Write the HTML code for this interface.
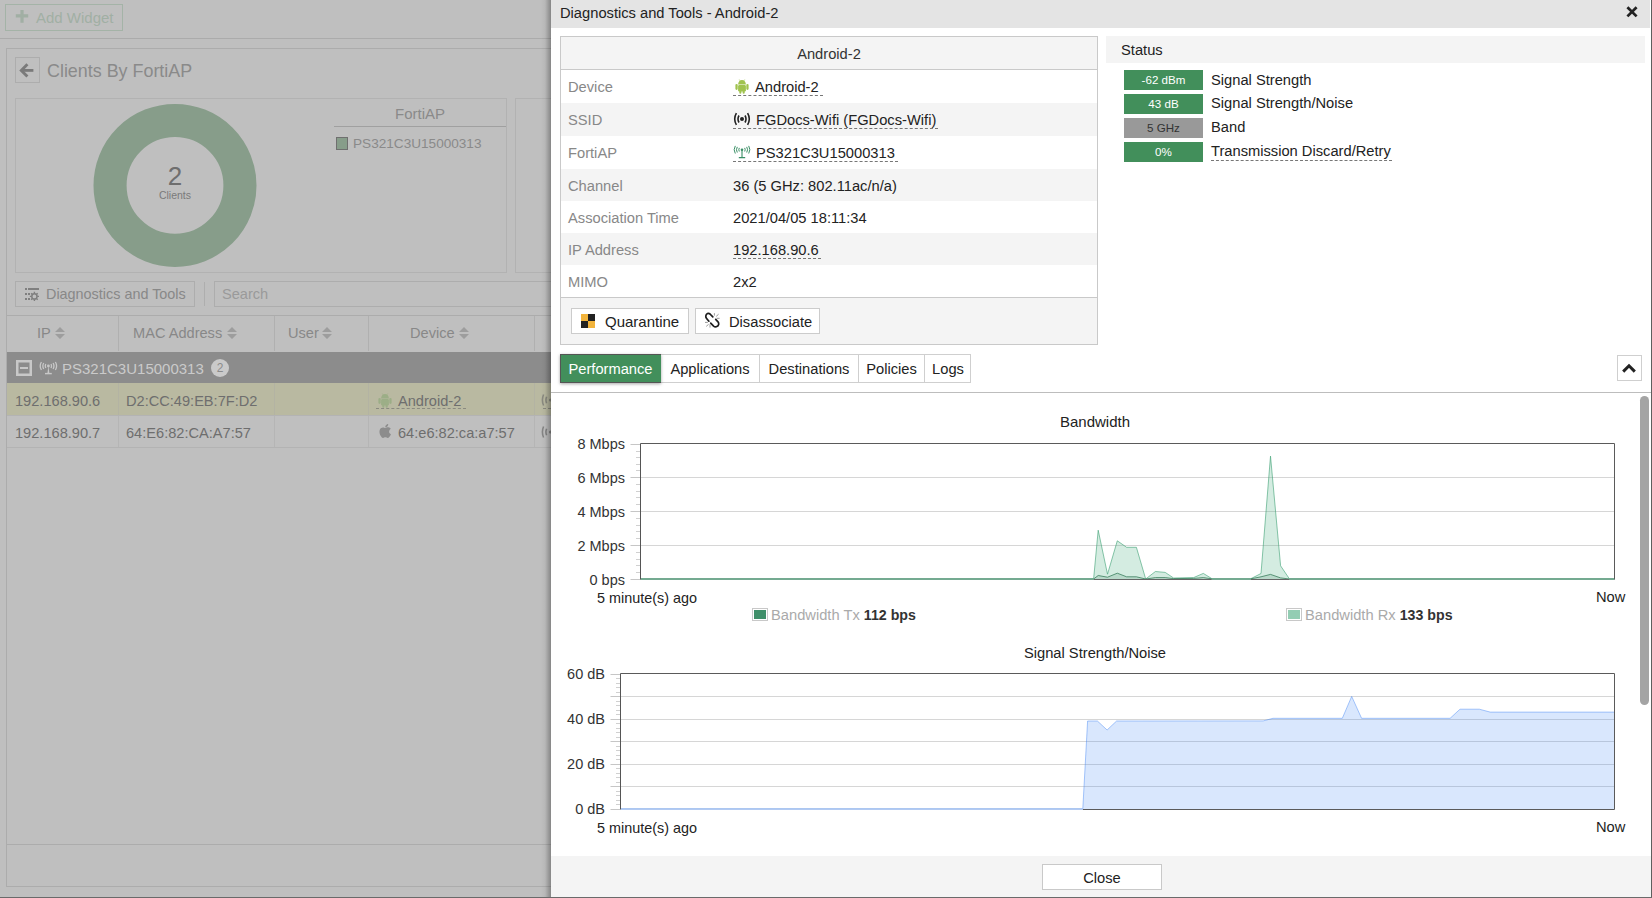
<!DOCTYPE html>
<html><head><meta charset="utf-8">
<style>
*{margin:0;padding:0;box-sizing:border-box}
html,body{width:1652px;height:898px;overflow:hidden;background:#bfbfbf;font-family:"Liberation Sans",sans-serif;position:relative}
.a{position:absolute;white-space:nowrap}
.t{position:absolute;white-space:nowrap;font-size:14.7px;line-height:15px}
.bx{position:absolute}
</style></head><body>
<!-- ===== background page ===== -->
<div id="bg">
<div class="bx" style="left:5px;top:4px;width:118px;height:27px;border:1px solid #a4b3a7"></div>
<svg class="a" style="left:15px;top:9px" width="15" height="15" viewBox="0 0 15 15"><path d="M7 1V13.7M0.8 6.9H13.2" stroke="#a1afa4" stroke-width="3.2"/></svg>
<div class="t" style="left:36px;top:10px;color:#a1afa4;font-size:15px">Add Widget</div>
<div class="bx" style="left:0;top:38px;width:551px;height:1px;background:#ababab"></div>
<!-- widget panel -->
<div class="bx" style="left:6px;top:48px;width:560px;height:839px;border:1px solid #acacac"></div>
<div class="bx" style="left:7px;top:844px;width:550px;height:1px;background:#acacac"></div>
<div class="bx" style="left:15px;top:57px;width:25px;height:26px;border:1px solid #adadad"></div>
<svg class="a" style="left:15px;top:56px" width="25" height="28" viewBox="0 0 25 28"><path d="M12.4 8.2L6.3 14.4L12.4 20.6" stroke="#7a7a7a" stroke-width="2.9" fill="none" stroke-linejoin="miter"/><path d="M7 14.4H18.4" stroke="#7a7a7a" stroke-width="2.8"/></svg>
<div class="t" style="left:47px;top:62px;color:#8a8a8a;font-size:17.9px;line-height:18px">Clients By FortiAP</div>
<div class="bx" style="left:15px;top:98px;width:492px;height:175px;border:1px solid #b2b2b2"></div>
<div class="bx" style="left:515px;top:98px;width:60px;height:175px;border:1px solid #b2b2b2"></div>
<svg class="a" style="left:0;top:0" width="551" height="300">
<circle cx="175" cy="185.4" r="64.95" fill="none" stroke="#879d8a" stroke-width="33.1"/>
</svg>
<div class="t" style="left:145px;top:163px;width:60px;text-align:center;color:#6e6e6e;font-size:26px;line-height:26px">2</div>
<div class="t" style="left:145px;top:190px;width:60px;text-align:center;color:#7a7a7a;font-size:10.5px;line-height:11px">Clients</div>
<div class="t" style="left:334px;top:106px;width:172px;text-align:center;color:#8a8a8a;font-size:15px">FortiAP</div>
<div class="bx" style="left:334px;top:126px;width:172px;height:1px;background:#a0a0a0"></div>
<div class="bx" style="left:336px;top:137px;width:12px;height:13px;background:#879d8a;border:1px solid #6f6f6f"></div>
<div class="t" style="left:353px;top:136px;color:#8a8a8a;font-size:13.6px">PS321C3U15000313</div>
<!-- toolbar -->
<div class="bx" style="left:15px;top:281px;width:180px;height:26px;border:1px solid #adadad"></div>
<div class="t" style="left:46px;top:287px;color:#888;font-size:14.4px">Diagnostics and Tools</div>
<div class="bx" style="left:204px;top:282px;width:1px;height:24px;background:#aeaeae"></div>
<div class="bx" style="left:214px;top:281px;width:400px;height:26px;border:1px solid #adadad"></div>
<div class="t" style="left:222px;top:287px;color:#9a9a9a;font-size:14.6px">Search</div>
<!-- table -->
<div class="bx" style="left:7px;top:315px;width:544px;height:1px;background:#acacac"></div>
<div class="bx" style="left:7px;top:352px;width:544px;height:31px;background:#8c8c8c"></div>
<div class="bx" style="left:7px;top:383px;width:544px;height:32px;background:#b9b9a1"></div>
<div class="bx" style="left:7px;top:415px;width:544px;height:1px;background:#b3b3b3"></div>
<div class="bx" style="left:7px;top:447px;width:544px;height:1px;background:#b3b3b3"></div>
<div class="bx" style="left:118px;top:316px;width:1px;height:35px;background:#b0b0b0"></div>
<div class="bx" style="left:274px;top:316px;width:1px;height:35px;background:#b0b0b0"></div>
<div class="bx" style="left:368px;top:316px;width:1px;height:35px;background:#b0b0b0"></div>
<div class="bx" style="left:534px;top:316px;width:1px;height:35px;background:#b0b0b0"></div>
<div class="bx" style="left:118px;top:383px;width:1px;height:32px;background:#b3b3a3"></div>
<div class="bx" style="left:274px;top:383px;width:1px;height:32px;background:#b3b3a3"></div>
<div class="bx" style="left:368px;top:383px;width:1px;height:32px;background:#b3b3a3"></div>
<div class="bx" style="left:534px;top:383px;width:1px;height:32px;background:#b3b3a3"></div>
<div class="bx" style="left:118px;top:416px;width:1px;height:31px;background:#b5b5b5"></div>
<div class="bx" style="left:274px;top:416px;width:1px;height:31px;background:#b5b5b5"></div>
<div class="bx" style="left:368px;top:416px;width:1px;height:31px;background:#b5b5b5"></div>
<div class="bx" style="left:534px;top:416px;width:1px;height:31px;background:#b5b5b5"></div>
<!-- header texts -->
<div class="t" style="left:37px;top:326px;color:#888;font-size:14.6px">IP</div>
<div class="t" style="left:133px;top:326px;color:#888;font-size:14.6px">MAC Address</div>
<div class="t" style="left:288px;top:326px;color:#888;font-size:14.6px">User</div>
<div class="t" style="left:410px;top:326px;color:#888;font-size:14.6px">Device</div>
<svg class="a" style="left:0;top:320px" width="551" height="30">
<g fill="#9d9d9d">
<path d="M55 12L60 7L65 12ZM55 14L65 14L60 19Z"/>
<path d="M227 12L232 7L237 12ZM227 14L237 14L232 19Z"/>
<path d="M322 12L327 7L332 12ZM322 14L332 14L327 19Z"/>
<path d="M459 12L464 7L469 12ZM459 14L469 14L464 19Z"/>
</g></svg>
<!-- group row -->
<div class="bx" style="left:16px;top:360px;width:16px;height:16px;border:2px solid #c8c8c8;box-shadow:inset 0 0 0 0.5px #c8c8c8"></div>
<div class="bx" style="left:20px;top:367px;width:8px;height:2px;background:#c8c8c8"></div>
<svg class="a" style="left:39px;top:361px" width="19" height="14" viewBox="0 0 19 14"><g fill="none" stroke="#c8c8c8" stroke-width="1.3"><path d="M2.4 1Q0 5 2.4 9M16.4 1Q18.8 5 16.4 9M4.7 2Q3 5 4.7 8M14.1 2Q15.8 5 14.1 8M6.8 3Q5.8 5 6.8 7M12 3Q13 5 12 7"/></g><circle cx="9.4" cy="5" r="1.4" fill="#c8c8c8"/><path d="M9.4 5L8.4 12.4H10.4Z" fill="#c8c8c8"/><path d="M6 12.6H12.8" stroke="#c8c8c8" stroke-width="1.4"/></svg>
<div class="t" style="left:62px;top:361px;color:#cacaca;font-size:15px">PS321C3U15000313</div>
<div class="bx" style="left:211px;top:359px;width:18px;height:18px;border-radius:9px;background:#cacaca"></div>
<div class="t" style="left:211px;top:362px;width:18px;text-align:center;color:#8c8c8c;font-size:12px;line-height:12px">2</div>
<!-- rows -->
<div class="t" style="left:15px;top:394px;color:#6e6e6e;font-size:14.6px">192.168.90.6</div>
<div class="t" style="left:126px;top:394px;color:#6e6e6e;font-size:14.6px">D2:CC:49:EB:7F:D2</div>
<svg class="a" style="left:378px;top:393px" width="14" height="15" viewBox="0 0 14 15"><g fill="#9cae87"><path d="M3.1 5.5A3.9 4.5 0 0 1 10.9 5.5Z"/><rect x="3.1" y="5.9" width="7.8" height="6.6" rx="1.3"/><rect x="0.4" y="4.9" width="2.3" height="6.1" rx="1.15"/><rect x="11.3" y="4.9" width="2.3" height="6.1" rx="1.15"/><rect x="4.3" y="11" width="2.1" height="3.8" rx="1"/><rect x="7.6" y="11" width="2.1" height="3.8" rx="1"/></g><path d="M4.2 0.4L5.2 2.2M9.8 0.4L8.8 2.2" stroke="#9cae87" stroke-width="0.5"/></svg>
<div class="t" style="left:398px;top:394px;color:#6e6e6e;font-size:14.6px">Android-2</div>
<div class="bx" style="left:376px;top:408px;width:90px;height:0;border-top:1px dashed #8a8a80"></div>
<div class="t" style="left:15px;top:426px;color:#6e6e6e;font-size:14.6px">192.168.90.7</div>
<div class="t" style="left:126px;top:426px;color:#6e6e6e;font-size:14.6px">64:E6:82:CA:A7:57</div>
<svg class="a" style="left:378px;top:423px" width="14" height="16" viewBox="0 0 14 16"><path d="M11.2 8.6c0-1.8 1.5-2.7 1.6-2.8-.9-1.3-2.2-1.4-2.7-1.5-1.2-.1-2.2.7-2.8.7-.6 0-1.5-.7-2.4-.6C3.7 4.4 2.6 5.100 2 6.200.8 8.300 1.700 11.500 2.900 13.200c.6.800 1.300 1.800 2.200 1.700.9 0 1.200-.6 2.300-.6s1.400.6 2.300.6c1 0 1.600-.9 2.200-1.700.7-1 1-1.900 1-2-.1 0-1.900-.7-1.900-2.700zM9.500 3.300c.5-.6.800-1.400.7-2.300-.7 0-1.600.5-2.100 1.100-.5.500-.9 1.400-.8 2.200.8.1 1.600-.4 2.200-1z" fill="#8c8c8c"/></svg>
<div class="t" style="left:398px;top:426px;color:#6e6e6e;font-size:14.6px">64:e6:82:ca:a7:57</div>
<svg class="a" style="left:541px;top:393px" width="12" height="14" viewBox="0 0 12 14"><g fill="none" stroke="#8a8a80" stroke-width="1.6"><path d="M2.6 1.5Q0.2 7 2.6 12.5M5.6 3.8Q4.2 7 5.6 10.2"/></g><circle cx="9.5" cy="7" r="1.6" fill="#8a8a80"/></svg>
<svg class="a" style="left:541px;top:425px" width="12" height="14" viewBox="0 0 12 14"><g fill="none" stroke="#858585" stroke-width="1.6"><path d="M2.6 1.5Q0.2 7 2.6 12.5M5.6 3.8Q4.2 7 5.6 10.2"/></g><circle cx="9.5" cy="7" r="1.6" fill="#858585"/></svg>
<div class="bx" style="left:543px;top:408px;width:8px;height:0;border-top:1px dashed #8a8a80"></div>
<!-- diag button icon -->
<svg class="a" style="left:18px;top:282px" width="30" height="24" viewBox="0 0 30 24"><g fill="#7f7f7f"><rect x="7" y="6" width="2" height="2"/><rect x="10" y="6" width="11" height="2"/><rect x="7" y="11" width="2" height="2"/><rect x="10" y="11" width="2" height="2"/><rect x="7" y="16" width="2" height="2"/><rect x="10" y="16" width="2" height="2"/></g><circle cx="16.4" cy="14.4" r="2.6" fill="none" stroke="#7f7f7f" stroke-width="1.5"/><path d="M19.20 14.40L21.00 14.40M18.38 16.38L19.65 17.65M16.40 17.20L16.40 19.00M14.42 16.38L13.15 17.65M13.60 14.40L11.80 14.40M14.42 12.42L13.15 11.15M16.40 11.60L16.40 9.80M18.38 12.42L19.65 11.15" stroke="#7f7f7f" stroke-width="1.4"/></svg>
</div>

<!-- ===== dialog ===== -->
<div class="bx" style="left:541px;top:0;width:10px;height:897px;background:linear-gradient(to right,rgba(0,0,0,0),rgba(0,0,0,0.04) 40%,rgba(0,0,0,0.3))"></div>
<div id="dlg" class="bx" style="left:551px;top:0;width:1101px;height:897px;background:#fff"></div>
<div class="bx" style="left:551px;top:0;width:1099px;height:28px;background:#e4e4e4"></div>
<div class="bx" style="left:1651px;top:0;width:1px;height:897px;background:#5f5f5f"></div>
<div class="t" style="left:560px;top:6px;color:#222">Diagnostics and Tools - Android-2</div>
<svg class="a" style="left:1625px;top:5px" width="14" height="14" viewBox="0 0 14 14"><path d="M2.4 2.2L11.6 11.4M11.6 2.2L2.4 11.4" stroke="#222" stroke-width="2.7"/></svg>
<!-- info box -->
<div class="bx" style="left:560px;top:36px;width:538px;height:309px;border:1px solid #c9c9c9;background:#fff"></div>
<div class="bx" style="left:561px;top:37px;width:536px;height:32px;background:#f4f4f4"></div>
<div class="bx" style="left:561px;top:69px;width:536px;height:1px;background:#c9c9c9"></div>
<div class="bx" style="left:561px;top:103px;width:536px;height:33px;background:#f4f4f4"></div>
<div class="bx" style="left:561px;top:169px;width:536px;height:32px;background:#f4f4f4"></div>
<div class="bx" style="left:561px;top:233px;width:536px;height:32px;background:#f4f4f4"></div>
<div class="bx" style="left:561px;top:297px;width:536px;height:1px;background:#c9c9c9"></div>
<div class="bx" style="left:561px;top:298px;width:536px;height:46px;background:#f4f4f4"></div>
<div class="t" style="left:561px;top:47px;width:536px;text-align:center;color:#333">Android-2</div>
<div class="t" style="left:568px;top:80px;color:#888">Device</div>
<div class="t" style="left:568px;top:113px;color:#888">SSID</div>
<div class="t" style="left:568px;top:146px;color:#888">FortiAP</div>
<div class="t" style="left:568px;top:179px;color:#888">Channel</div>
<div class="t" style="left:568px;top:211px;color:#888">Association Time</div>
<div class="t" style="left:568px;top:243px;color:#888">IP Address</div>
<div class="t" style="left:568px;top:275px;color:#888">MIMO</div>
<svg class="a" style="left:735px;top:79px" width="14" height="15" viewBox="0 0 14 15"><g fill="#a0c34f"><path d="M3.1 5.5A3.9 4.5 0 0 1 10.9 5.5Z"/><rect x="3.1" y="5.9" width="7.8" height="6.6" rx="1.3"/><rect x="0.4" y="4.9" width="2.3" height="6.1" rx="1.15"/><rect x="11.3" y="4.9" width="2.3" height="6.1" rx="1.15"/><rect x="4.3" y="11" width="2.1" height="3.8" rx="1"/><rect x="7.6" y="11" width="2.1" height="3.8" rx="1"/></g><path d="M4.2 0.4L5.2 2.2M9.8 0.4L8.8 2.2" stroke="#a0c34f" stroke-width="0.5"/></svg>
<div class="t" style="left:755px;top:80px;color:#222">Android-2</div>
<div class="bx" style="left:733px;top:95px;width:90px;height:0;border-top:1px dashed #777"></div>
<svg class="a" style="left:733px;top:112px" width="18" height="14" viewBox="0 0 18 14"><g fill="none" stroke="#222" stroke-width="1.6"><path d="M3.4 1.2Q0 7 3.4 12.8M14.6 1.2Q18 7 14.6 12.8M6 3.5Q4 7 6 10.5M12 3.5Q14 7 12 10.5"/></g><circle cx="9" cy="7" r="2" fill="#222"/></svg>
<div class="t" style="left:756px;top:113px;color:#222">FGDocs-Wifi (FGDocs-Wifi)</div>
<div class="bx" style="left:733px;top:128px;width:205px;height:0;border-top:1px dashed #777"></div>
<svg class="a" style="left:733px;top:145px" width="18" height="14" viewBox="0 0 18 14"><g fill="none" stroke="#3a8f66" stroke-width="1"><path d="M2.3 0.9Q0 4.7 2.3 8.5M15.7 0.9Q18 4.7 15.7 8.5M4.3 1.9Q2.6 4.7 4.3 7.5M13.7 1.9Q15.4 4.7 13.7 7.5M6.3 2.9Q5.3 4.7 6.3 6.5M11.7 2.9Q12.7 4.7 11.7 6.5"/><path d="M9 5V12.4M5.8 12.6H12.2" stroke-width="1.1"/></g><circle cx="9" cy="4.7" r="1.3" fill="#3a8f66"/></svg>
<div class="t" style="left:756px;top:146px;color:#222">PS321C3U15000313</div>
<div class="bx" style="left:733px;top:161px;width:165px;height:0;border-top:1px dashed #777"></div>
<div class="t" style="left:733px;top:179px;color:#222">36 (5 GHz: 802.11ac/n/a)</div>
<div class="t" style="left:733px;top:211px;color:#222">2021/04/05 18:11:34</div>
<div class="t" style="left:733px;top:243px;color:#222">192.168.90.6</div>
<div class="bx" style="left:733px;top:258px;width:88px;height:0;border-top:1px dashed #777"></div>
<div class="t" style="left:733px;top:275px;color:#222">2x2</div>
<!-- buttons -->
<div class="bx" style="left:571px;top:308px;width:118px;height:26px;border:1px solid #ccc;background:#fff"></div>
<svg class="a" style="left:581px;top:314px" width="14" height="14" viewBox="0 0 14 14"><rect x="0" y="0" width="7" height="7" fill="#f2b43c"/><rect x="7" y="0" width="7" height="7" fill="#222"/><rect x="0" y="7" width="7" height="7" fill="#222"/><rect x="7" y="7" width="7" height="7" fill="#f2b43c"/></svg>
<div class="t" style="left:605px;top:314px;color:#222;font-size:15px">Quarantine</div>
<div class="bx" style="left:695px;top:308px;width:125px;height:26px;border:1px solid #ccc;background:#fff"></div>
<svg class="a" style="left:698px;top:308px" width="30" height="26" viewBox="0 0 30 26"><g fill="none" stroke="#1e1e1e" stroke-width="1.7" stroke-linecap="round" stroke-linejoin="round"><path d="M14.8 8.8L12 6Q10.8 4.9 9.5 5.5Q8 6.3 7.8 8Q7.7 9.4 8.6 10.5L10.9 13.2"/><path d="M12.7 15.2L15.6 18.2Q16.8 19.2 18.3 18.8Q20.4 18 20.7 16.3Q20.9 15 20 13.8L17.7 11.3"/></g><g stroke="#9a9a9a" stroke-width="1"><path d="M16.4 5.2V7.6M18.2 8.4L20.6 6.2M18.6 10.3H21.6M7 14.4H9.8M8.2 18.4L10.6 16.3M12 16.3V19.6"/></g></svg>
<div class="t" style="left:729px;top:315px;color:#222">Disassociate</div>
<!-- status -->
<div class="bx" style="left:1106px;top:36px;width:539px;height:27px;background:#f4f4f4"></div>
<div class="t" style="left:1121px;top:43px;color:#222">Status</div>
<div class="bx" style="left:1124px;top:70px;width:79px;height:20px;background:#428f5b"></div>
<div class="bx" style="left:1124px;top:94px;width:79px;height:20px;background:#428f5b"></div>
<div class="bx" style="left:1124px;top:118px;width:79px;height:20px;background:#999"></div>
<div class="bx" style="left:1124px;top:142px;width:79px;height:20px;background:#428f5b"></div>
<div class="t" style="left:1124px;top:74px;width:79px;text-align:center;color:#fff;font-size:11.6px;line-height:12px">-62 dBm</div>
<div class="t" style="left:1124px;top:98px;width:79px;text-align:center;color:#fff;font-size:11.6px;line-height:12px">43 dB</div>
<div class="t" style="left:1124px;top:122px;width:79px;text-align:center;color:#333;font-size:11.6px;line-height:12px">5 GHz</div>
<div class="t" style="left:1124px;top:146px;width:79px;text-align:center;color:#fff;font-size:11.6px;line-height:12px">0%</div>
<div class="t" style="left:1211px;top:73px;color:#222">Signal Strength</div>
<div class="t" style="left:1211px;top:96px;color:#222">Signal Strength/Noise</div>
<div class="t" style="left:1211px;top:120px;color:#222">Band</div>
<div class="t" style="left:1211px;top:144px;color:#222">Transmission Discard/Retry</div>
<div class="bx" style="left:1211px;top:160px;width:181px;height:0;border-top:1px dashed #777"></div>
<!-- tabs -->
<div class="bx" style="left:560px;top:354px;width:411px;height:29px;border:1px solid #cfcfcf;background:#fff"></div>
<div class="bx" style="left:759px;top:354px;width:1px;height:29px;background:#cfcfcf"></div>
<div class="bx" style="left:858px;top:354px;width:1px;height:29px;background:#cfcfcf"></div>
<div class="bx" style="left:924px;top:354px;width:1px;height:29px;background:#cfcfcf"></div>
<div class="bx" style="left:560px;top:354px;width:101px;height:29px;background:#428f5b;border:1px solid #555;border-right:0;box-shadow:0 1px 3px rgba(0,0,0,0.35)"></div>
<div class="t" style="left:560px;top:362px;width:101px;text-align:center;color:#fff">Performance</div>
<div class="t" style="left:661px;top:362px;width:98px;text-align:center;color:#222">Applications</div>
<div class="t" style="left:760px;top:362px;width:98px;text-align:center;color:#222">Destinations</div>
<div class="t" style="left:859px;top:362px;width:65px;text-align:center;color:#222">Policies</div>
<div class="t" style="left:925px;top:362px;width:46px;text-align:center;color:#222">Logs</div>
<div class="bx" style="left:1617px;top:355px;width:25px;height:26px;border:1px solid #cfcfcf"></div>
<svg class="a" style="left:1620px;top:362px" width="18" height="13" viewBox="0 0 18 13"><path d="M3.2 9.6L9 3.8L14.8 9.6" fill="none" stroke="#222" stroke-width="3"/></svg>
<div class="bx" style="left:551px;top:392px;width:1100px;height:1px;background:#bdbdbd"></div>
<div class="bx" style="left:1640px;top:396px;width:9px;height:309px;border-radius:4.5px;background:#a4a4a4"></div>
<!-- footer -->
<div class="bx" style="left:551px;top:856px;width:1100px;height:41px;background:#f4f4f4"></div>
<div class="bx" style="left:1042px;top:864px;width:120px;height:26px;border:1px solid #c9c9c9;background:#fff"></div>
<div class="t" style="left:1042px;top:871px;width:120px;text-align:center;color:#222">Close</div>
<!--CHARTS-->
<svg class="a" style="left:0;top:0" width="1652" height="898" shape-rendering="auto">
<path d="M640.5 477.5H1614.5" stroke="#d6d6d6"/>
<path d="M640.5 511.5H1614.5" stroke="#d6d6d6"/>
<path d="M640.5 545.5H1614.5" stroke="#d6d6d6"/>
<path d="M630.5 444.5H640" stroke="#c6c6c6"/>
<path d="M636 451.5H640" stroke="#d0d0d0"/>
<path d="M636 457.5H640" stroke="#d0d0d0"/>
<path d="M636 464.5H640" stroke="#d0d0d0"/>
<path d="M636 470.5H640" stroke="#d0d0d0"/>
<path d="M630.5 477.5H640" stroke="#c6c6c6"/>
<path d="M636 484.5H640" stroke="#d0d0d0"/>
<path d="M636 491.5H640" stroke="#d0d0d0"/>
<path d="M636 497.5H640" stroke="#d0d0d0"/>
<path d="M636 504.5H640" stroke="#d0d0d0"/>
<path d="M630.5 511.5H640" stroke="#c6c6c6"/>
<path d="M636 518.5H640" stroke="#d0d0d0"/>
<path d="M636 525.5H640" stroke="#d0d0d0"/>
<path d="M636 531.5H640" stroke="#d0d0d0"/>
<path d="M636 538.5H640" stroke="#d0d0d0"/>
<path d="M630.5 545.5H640" stroke="#c6c6c6"/>
<path d="M636 552.5H640" stroke="#d0d0d0"/>
<path d="M636 559.5H640" stroke="#d0d0d0"/>
<path d="M636 565.5H640" stroke="#d0d0d0"/>
<path d="M636 572.5H640" stroke="#d0d0d0"/>
<path d="M630.5 579.5H640" stroke="#c6c6c6"/>
<polygon points="640.5,579.0 1093.6,579.0 1098.2,530.2 1107.5,574.2 1117.3,540.8 1126.6,547.3 1136.4,547.3 1145.7,579.0 1155.4,571.5 1165.2,572.4 1173.6,578.0 1193.6,577.6 1203.3,573.4 1211.8,578.6 1251.0,578.6 1261.0,573.5 1270.5,456.1 1280.6,565.8 1289.5,579.0 1614.5,579.0 1614.5,579.5 640.5,579.5" fill="rgba(90,180,140,0.26)"/>
<polyline points="640.5,579.0 1093.6,579.0 1098.2,530.2 1107.5,574.2 1117.3,540.8 1126.6,547.3 1136.4,547.3 1145.7,579.0 1155.4,571.5 1165.2,572.4 1173.6,578.0 1193.6,577.6 1203.3,573.4 1211.8,578.6 1251.0,578.6 1261.0,573.5 1270.5,456.1 1280.6,565.8 1289.5,579.0 1614.5,579.0" fill="none" stroke="rgba(60,160,115,0.6)" stroke-width="1"/>
<polygon points="640.5,579.0 1093.6,579.0 1098.2,575.5 1107.5,577.2 1117.3,573.2 1126.6,576.8 1136.4,576.8 1145.7,579.0 1155.4,577.6 1165.2,577.6 1173.6,578.6 1193.6,578.4 1203.3,577.6 1211.8,578.8 1251.0,578.8 1261.0,576.8 1270.5,574.4 1280.6,577.9 1289.5,579.0 1614.5,579.0 1614.5,579.5 640.5,579.5" fill="rgba(60,130,95,0.18)"/>
<polyline points="640.5,579.0 1093.6,579.0 1098.2,575.5 1107.5,577.2 1117.3,573.2 1126.6,576.8 1136.4,576.8 1145.7,579.0 1155.4,577.6 1165.2,577.6 1173.6,578.6 1193.6,578.4 1203.3,577.6 1211.8,578.8 1251.0,578.8 1261.0,576.8 1270.5,574.4 1280.6,577.9 1289.5,579.0 1614.5,579.0" fill="none" stroke="rgba(50,120,85,0.75)" stroke-width="1"/>
<path d="M640.5 443.5H1614.5V579.5" fill="none" stroke="#5a5a5a"/>
<path d="M640.5 443.5V579.5" fill="none" stroke="#555"/>
<path d="M1093.6 579.5H1211.8M1251 579.5H1289.5" fill="none" stroke="#666"/>
<path d="M641.0 579H1093.6M1211.8 579H1251M1289.5 579H1614.0" fill="none" stroke="#74aa91" stroke-width="2"/>
<path d="M620.5 696.5H1614.5" stroke="#d6d6d6"/>
<path d="M620.5 719.5H1614.5" stroke="#d6d6d6"/>
<path d="M620.5 741.5H1614.5" stroke="#d6d6d6"/>
<path d="M620.5 764.5H1614.5" stroke="#d6d6d6"/>
<path d="M620.5 786.5H1614.5" stroke="#d6d6d6"/>
<path d="M610.5 674.5H620" stroke="#c6c6c6"/>
<path d="M616 678.5H620" stroke="#d0d0d0"/>
<path d="M616 683.5H620" stroke="#d0d0d0"/>
<path d="M616 687.5H620" stroke="#d0d0d0"/>
<path d="M616 692.5H620" stroke="#d0d0d0"/>
<path d="M610.5 696.5H620" stroke="#c6c6c6"/>
<path d="M616 701.5H620" stroke="#d0d0d0"/>
<path d="M616 705.5H620" stroke="#d0d0d0"/>
<path d="M616 710.5H620" stroke="#d0d0d0"/>
<path d="M616 714.5H620" stroke="#d0d0d0"/>
<path d="M610.5 719.5H620" stroke="#c6c6c6"/>
<path d="M616 723.5H620" stroke="#d0d0d0"/>
<path d="M616 728.5H620" stroke="#d0d0d0"/>
<path d="M616 732.5H620" stroke="#d0d0d0"/>
<path d="M616 737.5H620" stroke="#d0d0d0"/>
<path d="M610.5 741.5H620" stroke="#c6c6c6"/>
<path d="M616 746.5H620" stroke="#d0d0d0"/>
<path d="M616 750.5H620" stroke="#d0d0d0"/>
<path d="M616 755.5H620" stroke="#d0d0d0"/>
<path d="M616 759.5H620" stroke="#d0d0d0"/>
<path d="M610.5 764.5H620" stroke="#c6c6c6"/>
<path d="M616 768.5H620" stroke="#d0d0d0"/>
<path d="M616 773.5H620" stroke="#d0d0d0"/>
<path d="M616 777.5H620" stroke="#d0d0d0"/>
<path d="M616 782.5H620" stroke="#d0d0d0"/>
<path d="M610.5 786.5H620" stroke="#c6c6c6"/>
<path d="M616 791.5H620" stroke="#d0d0d0"/>
<path d="M616 795.5H620" stroke="#d0d0d0"/>
<path d="M616 800.5H620" stroke="#d0d0d0"/>
<path d="M616 804.5H620" stroke="#d0d0d0"/>
<path d="M610.5 809.5H620" stroke="#c6c6c6"/>
<polygon points="620.5,808.8 1082.8,808.8 1087.6,721.0 1097.4,721.0 1107.1,730.0 1116.6,721.0 1263.2,720.9 1273.0,718.3 1342.3,718.3 1351.7,696.4 1361.6,718.3 1450.1,718.3 1460.0,709.2 1479.3,709.2 1490.2,712.1 1614.5,712.1 1614.5,809.5 620.5,809.5" fill="rgba(66,133,244,0.2)"/>
<polyline points="620.5,808.8 1082.8,808.8 1087.6,721.0 1097.4,721.0 1107.1,730.0 1116.6,721.0 1263.2,720.9 1273.0,718.3 1342.3,718.3 1351.7,696.4 1361.6,718.3 1450.1,718.3 1460.0,709.2 1479.3,709.2 1490.2,712.1 1614.5,712.1" fill="none" stroke="rgba(66,133,244,0.45)" stroke-width="1"/>
<path d="M620.5 673.5H1614.5V809.5H1082.8" fill="none" stroke="#5a5a5a"/>
<path d="M621.0 809H1082.8" fill="none" stroke="#a6c2ee" stroke-width="1.6"/>
<path d="M620.5 673.5V809.5" fill="none" stroke="#555"/>
</svg>
<div class="bx" style="left:752px;top:608px;width:16px;height:13px;background:#3f8f6a;border:1px solid #c8c8c8;box-shadow:inset 0 0 0 1px #fff"></div>
<div class="bx" style="left:1286px;top:608px;width:16px;height:13px;background:#93cdb3;border:1px solid #c8c8c8;box-shadow:inset 0 0 0 1px #fff"></div>
<div class="t" style="left:995px;top:414px;width:200px;text-align:center;color:#222;font-size:15px">Bandwidth</div>
<div class="t" style="left:560px;top:437px;width:65px;text-align:right;color:#333;font-size:14.5px">8 Mbps</div>
<div class="t" style="left:560px;top:471px;width:65px;text-align:right;color:#333;font-size:14.5px">6 Mbps</div>
<div class="t" style="left:560px;top:505px;width:65px;text-align:right;color:#333;font-size:14.5px">4 Mbps</div>
<div class="t" style="left:560px;top:539px;width:65px;text-align:right;color:#333;font-size:14.5px">2 Mbps</div>
<div class="t" style="left:560px;top:573px;width:65px;text-align:right;color:#333;font-size:14.5px">0 bps</div>
<div class="t" style="left:597px;top:591px;color:#222;font-size:14.4px">5 minute(s) ago</div>
<div class="t" style="left:1596px;top:590px;color:#222;font-size:14.7px">Now</div>
<div class="t" style="left:771px;top:608px;color:#aaa">Bandwidth Tx <b style="color:#333;font-size:14.2px">112 bps</b></div>
<div class="t" style="left:1305px;top:608px;color:#aaa">Bandwidth Rx <b style="color:#333;font-size:14.2px">133 bps</b></div>
<div class="t" style="left:995px;top:646px;width:200px;text-align:center;color:#222">Signal Strength/Noise</div>
<div class="t" style="left:540px;top:667px;width:65px;text-align:right;color:#333;font-size:14.5px">60 dB</div>
<div class="t" style="left:540px;top:712px;width:65px;text-align:right;color:#333;font-size:14.5px">40 dB</div>
<div class="t" style="left:540px;top:757px;width:65px;text-align:right;color:#333;font-size:14.5px">20 dB</div>
<div class="t" style="left:540px;top:802px;width:65px;text-align:right;color:#333;font-size:14.5px">0 dB</div>
<div class="t" style="left:597px;top:821px;color:#222;font-size:14.4px">5 minute(s) ago</div>
<div class="t" style="left:1596px;top:820px;color:#222;font-size:14.7px">Now</div>
<!--/CHARTS-->
<div class="bx" style="left:0;top:897px;width:1652px;height:1px;background:#6a6a6a"></div>
</body></html>
